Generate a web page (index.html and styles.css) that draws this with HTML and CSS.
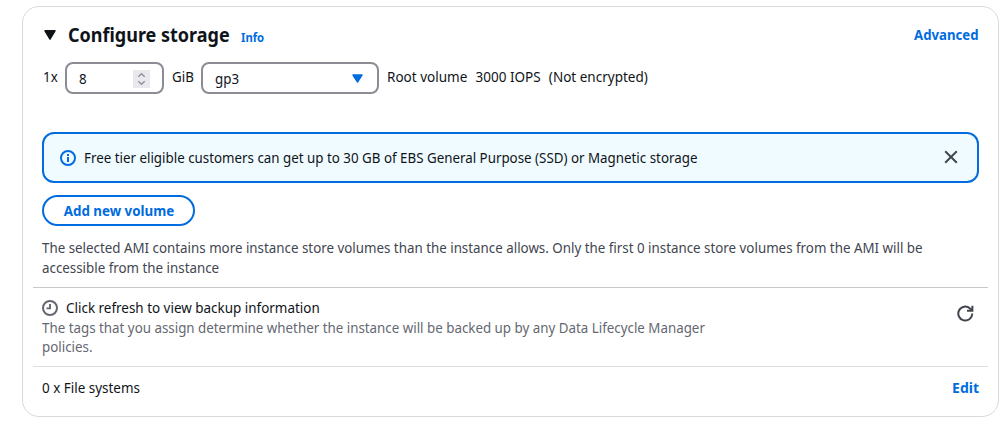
FILE: index.html
```html
<!DOCTYPE html>
<html lang="en">
<head>
<meta charset="utf-8">
<title>Configure storage</title>
<link rel="stylesheet" href="styles.css">
</head>
<body>
<section class="card">
  <header class="header">
    <svg class="caret" width="12" height="10" viewBox="0 0 12 10"><path d="M1 .8h10L6 9.2z" fill="#0f141a" stroke="#0f141a" stroke-width="1.4" stroke-linejoin="round"/></svg>
    <h2 class="title"><span class="narrow">Configure storage</span></h2>
    <a class="info"><span class="narrow">Info</span></a>
    <a class="link"><span class="narrow">Advanced</span></a>
  </header>
  <div class="volume">
    <span class="count narrow">1x</span>
    <div class="field size"><span class="narrow">8</span>
      <svg width="17" height="18" viewBox="0 0 17 18"><path fill="#e9e9ed" d="M0 0h17v18H0z"/><path d="M5.3 6.8 8.5 3.7l3.2 3.1M5.3 11.2l3.2 3.1 3.2-3.1" fill="none" stroke="#8f8f9d" stroke-width="1.4"/></svg>
    </div>
    <span class="unit narrow">GiB</span>
    <div class="field type"><span class="narrow">gp3</span>
      <svg width="11" height="9" viewBox="0 0 11 9"><path d="M1 1h9L5.5 8z" fill="#006ce0" stroke="#006ce0" stroke-width="1.4" stroke-linejoin="round"/></svg>
    </div>
    <span class="details narrow"><span>Root volume</span><span>3000 IOPS</span><span>(Not encrypted)</span></span>
  </div>
  <div class="alert">
    <svg width="16" height="16" viewBox="0 0 16 16"><circle cx="8" cy="8" r="7" fill="none" stroke="#006ce0" stroke-width="2"/><path d="M8 3.9v2M8 7v5" fill="none" stroke="#006ce0" stroke-width="2"/></svg>
    <span class="alert-text narrow">Free tier eligible customers can get up to 30 GB of EBS General Purpose (SSD) or Magnetic storage</span>
    <svg class="close" width="14" height="14" viewBox="0 0 14 14"><path d="m1.2 1.2 11.6 11.6m0-11.6L1.2 12.8" stroke="#424650" stroke-width="2"/></svg>
  </div>
  <button class="add"><span class="narrow">Add new volume</span></button>
  <p class="note narrow">The selected AMI contains more instance store volumes than the instance allows. Only the first 0 instance store volumes from the AMI will be<br>accessible from the instance</p>
  <div class="backup">
    <div>
      <div class="backup-title">
        <svg width="16" height="16" viewBox="0 0 16 16"><path d="M8 4v4.4H4.5" fill="none" stroke="#656871" stroke-width="1.9"/><circle cx="8" cy="8" r="7" fill="none" stroke="#656871" stroke-width="2"/></svg>
        <span class="narrow">Click refresh to view backup information</span>
      </div>
      <p class="tags narrow">The tags that you assign determine whether the instance will be backed up by any Data Lifecycle Manager<br>policies.</p>
    </div>
    <svg class="refresh" width="17" height="17" viewBox="0 0 17 17"><path d="M15.3 8.5A7 7 0 1 1 13 3.4l2.2 2.2M15.4.8v5H10" fill="none" stroke="#424650" stroke-width="2"/></svg>
  </div>
  <footer class="files"><span class="narrow">0 x File systems</span><a class="link"><span class="narrow">Edit</span></a></footer>
</section>
</body>
</html>
```
FILE: styles.css
```css
* { box-sizing: border-box; }
body {
  margin: 0;
  padding: 6px 6px 0 22px;
  background: #fff;
  color: #0f141a;
  font: 14px/19.6px "Noto Sans", sans-serif;
}
svg { display: block; flex: none; }
p, h2 { margin: 0; }
/* Condensed letterforms */
.narrow { display: inline-block; transform: scaleX(.953); transform-origin: left; }
.card {
  height: 411px;
  padding: 0 10px;
  border: 1px solid #d9d9df;
  border-radius: 17px;
  white-space: nowrap;
}
.header { display: flex; align-items: center; height: 48px; padding: 8px 10px 0 11px; }
.title { width: 161px; margin: -1px 0 0 12px; font-size: 20px; line-height: 24px; }
.title .narrow { transform: scaleX(.9); }
.info { margin: 5px 0 0 11.5px; font-size: 12px; line-height: 16px; font-weight: 700; color: #006ce0; }
.info .narrow { transform: scaleX(.94); }
.link { margin-left: auto; font-weight: 700; color: #006ce0; }
.link .narrow { transform: scaleX(.94); transform-origin: right; }
.volume { display: flex; align-items: center; height: 46px; padding-left: 10px; }
.count { width: 14px; margin-top: -3px; }
.unit { width: 21px; margin-top: -3px; }
.field {
  display: flex;
  align-items: center;
  justify-content: space-between;
  height: 32px;
  padding: 2px 12px 0;
  border: 2px solid #8c8c94;
  border-radius: 8px;
}
.size { width: 99px; margin: 0 8px; padding-left: 11.5px; }
.type { width: 178px; margin: 0 8px; padding: 0 14.5px 0 11.5px; }
.type .narrow { margin-top: 2px; }
.details { display: flex; gap: 8.5px; margin-top: -3px; transform: scaleX(.965); }
.alert {
  display: flex;
  align-items: center;
  height: 51px;
  margin: 31px 9px 0;
  padding: 0 19px 0 16px;
  border: 2px solid #006ce0;
  border-radius: 12px;
  background: #f0fbff;
}
.alert-text { margin-left: 8px; }
.close { margin: -2px 0 0 auto; }
.add {
  display: block;
  height: 31px;
  width: 153px;
  margin: 12px 0 0 9px;
  padding: 1px 0 0;
  border: 2px solid #006ce0;
  border-radius: 16px;
  background: #fff;
  color: #006ce0;
  font: inherit;
  font-weight: 700;
}
.add .narrow { transform-origin: center; }
.note { display: block; height: 40px; margin: 12px 9px 0; color: #424650; width: 924px; }
.backup {
  display: flex;
  justify-content: space-between;
  height: 79px;
  margin-top: 9px;
  padding: 10px 14px 0 9px;
  border-top: 1px solid #c6c6cd;
}
.backup-title { display: flex; align-items: center; gap: 8px; height: 20px; }
.backup-title .narrow, .files > .narrow { transform: scaleX(.96); }
.tags { color: #656871; line-height: 19.4px; }
.refresh { margin-top: 7px; }
.files {
  display: flex;
  align-items: center;
  height: 43px;
  padding: 0 9px;
  border-top: 1px solid #dedee3;
}
.files .link .narrow { transform: none; }
```
